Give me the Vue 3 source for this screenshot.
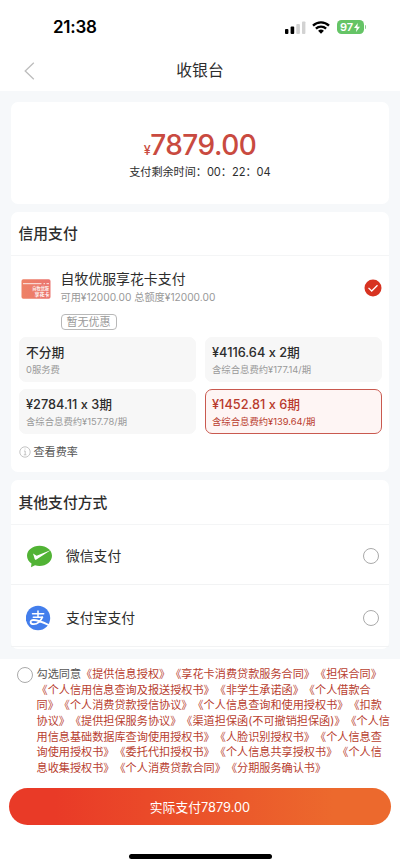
<script setup>
import { ref } from 'vue'

const plans = [
  { title: '不分期', note: '0服务费' },
  { title: '¥4116.64 x 2期', note: '含综合息费约¥177.14/期' },
  { title: '¥2784.11 x 3期', note: '含综合息费约¥157.78/期' },
  { title: '¥1452.81 x 6期', note: '含综合息费约¥139.64/期' },
]
const selected = ref(3)

const agreementLines = [
  '《提供信息授权》《享花卡消费贷款服务合同》《担保合同》',
  '《个人信用信息查询及报送授权书》《非学生承诺函》《个人借款合',
  '同》《个人消费贷款授信协议》《个人信息查询和使用授权书》《扣款',
  '协议》《提供担保服务协议》《渠道担保函(不可撤销担保函)》《个人信',
  '用信息基础数据库查询使用授权书》《人脸识别授权书》《个人信息查',
  '询使用授权书》《委托代扣授权书》《个人信息共享授权书》《个人信',
  '息收集授权书》《个人消费贷款合同》《分期服务确认书》',
]
</script>

<template>
  <div class="page">
    <header class="status">
      <span class="clock">21:38</span>
      <div class="indicators">
        <svg class="signal" width="21" height="13" viewBox="0 0 21 13">
          <rect x="0" y="8" width="3.4" height="5" rx="0.9" fill="#000" />
          <rect x="5.6" y="5.5" width="3.6" height="7.5" rx="0.9" fill="#000" />
          <rect x="11.3" y="3" width="3.6" height="10" rx="0.9" fill="#d2d2d2" />
          <rect x="17" y="0.4" width="3.4" height="12.6" rx="0.9" fill="#d2d2d2" />
        </svg>
        <svg class="wifi" width="18" height="13" viewBox="0 0 18 13" fill="none" stroke="#000" stroke-width="2.3">
          <path d="M1 4.6A11.5 11.5 0 0 1 17 4.6" />
          <path d="M3.9 7.7A7.4 7.4 0 0 1 14.1 7.7" />
          <path d="M6.1 9.8A4.2 4.2 0 0 1 11.9 9.8L9 12.8Z" fill="#000" stroke="none" />
        </svg>
        <div class="battery">
          <span>97</span>
          <svg width="6" height="9" viewBox="0 0 6 9"><path d="M3.8 0L0 5.1H2.6L2 9L6 3.7H3.4Z" fill="#fff" /></svg>
        </div>
        <i class="battery-tip"></i>
      </div>
    </header>

    <nav class="nav">
      <svg class="back" width="11" height="18" viewBox="0 0 11 18"><path d="M9.8 .8L1.2 9L9.8 17.2" fill="none" stroke="#bdbdbd" stroke-width="1.3" /></svg>
      <h1>收银台</h1>
    </nav>

    <main class="content">
      <section class="card amount">
        <div class="price"><small>¥</small>7879.00</div>
        <div class="timer">支付剩余时间：00：22：04</div>
      </section>

      <section class="card credit">
        <h2>信用支付</h2>
        <div class="account">
          <svg class="bank" width="30" height="20" viewBox="0 0 30 20">
            <defs>
              <linearGradient id="bankFill" x1="0" y1="0" x2="1" y2="0">
                <stop offset="0" stop-color="#ee8265" />
                <stop offset="1" stop-color="#ea7470" />
              </linearGradient>
            </defs>
            <rect x=".5" y=".3" width="29" height="19.4" rx="1.8" fill="url(#bankFill)" />
            <path d="M2 4.7H20.5M22.5 4.7H24M25.5 4.7H28" stroke="#fff" stroke-opacity=".85" stroke-width="1" />
            <text x="11.3" y="11.2" font-size="4.2" font-weight="500" fill="#fff">自牧优服</text>
            <text x="13.4" y="17.2" font-size="5" font-weight="700" fill="#fff">享花卡</text>
          </svg>
          <div class="info">
            <strong>自牧优服享花卡支付</strong>
            <p>可用¥12000.00 总额度¥12000.00</p>
            <span class="coupon">暂无优惠</span>
          </div>
          <svg class="checked" width="18" height="18" viewBox="0 0 18 18">
            <circle cx="9" cy="9" r="8.5" fill="#d73321" />
            <path d="M4.5 8.9L7.7 12L13.5 6.2" fill="none" stroke="#fff" stroke-width="1.3" />
          </svg>
        </div>
        <div class="plans">
          <div v-for="(plan, i) in plans" :key="i" class="plan" :class="{ active: selected === i }" @click="selected = i">
            <b>{{ plan.title }}</b>
            <span>{{ plan.note }}</span>
          </div>
        </div>
        <div class="rate">
          <svg width="12" height="12" viewBox="0 0 12 12" fill="none" stroke="#b5b5b5" stroke-width=".8">
            <circle cx="6" cy="6" r="5.2" />
            <path d="M5 5H6.2V8.7M4.8 8.8H7.4M5.6 3H6.5" />
          </svg>
          <span>查看费率</span>
        </div>
      </section>

      <section class="card others">
        <h2>其他支付方式</h2>
        <div class="method">
          <svg class="logo" width="26" height="26" viewBox="0 0 26 26">
            <path d="M13.5 2.7C20.4 2.7 26 7 26 12.8S20.4 23 13.5 23C11.9 23 10.4 22.7 9 22.2L5 24.3L5.5 20.6C2.8 18.8 1 16 1 12.8C1 7 6.6 2.7 13.5 2.7Z" fill="#51b335" />
            <path d="M7 10.4L10.6 12.7L25 7.1L10.4 16.5Q9.2 17.2 8.7 15.9Z" fill="#fff" />
          </svg>
          <span>微信支付</span>
          <i class="radio"></i>
        </div>
        <div class="method">
          <svg class="logo" width="26" height="26" viewBox="0 0 26 26">
            <circle cx="12" cy="13" r="12.2" fill="#437eec" />
            <g fill="none" stroke="#fff" stroke-linecap="round">
              <path d="M6.5 8.8H17.7M12 6V12.3M7.3 12.2H16.5" stroke-width="1.5" />
              <path d="M16.3 12.3C15 16 11.4 19.2 7.8 19.2C3.6 19.2 3.5 15 7.5 15C12 15 17 17.3 22.7 20" stroke-width="1.8" />
            </g>
          </svg>
          <span>支付宝支付</span>
          <i class="radio"></i>
        </div>
      </section>
    </main>

    <footer class="footer">
      <div class="agreement">
        <i class="radio"></i>
        <div class="terms">
          <div v-for="(line, i) in agreementLines" :key="i"><span v-if="i === 0" class="lead">勾选同意</span>{{ line }}</div>
        </div>
      </div>
      <button class="pay">实际支付7879.00</button>
      <div class="home"></div>
    </footer>
  </div>
</template>

<style>
body {
  background: #fff;
}
</style>

<style scoped>
* {
  box-sizing: border-box;
}
.page {
  width: 400px;
  height: 866px;
  display: flex;
  flex-direction: column;
  overflow: hidden;
  background: #fff;
  color: #2d2d2d;
  font-family: Inter, "Noto Sans CJK SC", sans-serif;
  font-feature-settings: "calt" 0;
  text-spacing-trim: space-all;
  white-space: nowrap;
}
.status {
  height: 50px;
  padding: 4px 34px 0 53px;
  display: flex;
  align-items: center;
  justify-content: space-between;
}
.clock {
  font-size: 17px;
  font-weight: 600;
  color: #000;
  letter-spacing: -0.25px;
}
.indicators {
  display: flex;
  align-items: center;
}
.signal {
  margin-right: -1px;
}
.wifi {
  margin-left: 7px;
}
.battery {
  width: 27px;
  height: 14px;
  margin-left: 7px;
  border-radius: 4.5px;
  background: #65c466;
  color: #fff;
  font-size: 11px;
  font-weight: 600;
  line-height: 14px;
  display: flex;
  align-items: center;
  justify-content: center;
  gap: 1px;
}
.battery-tip {
  width: 1.5px;
  height: 4px;
  margin-left: 1px;
  border-radius: 0 2px 2px 0;
  background: #8bd28c;
}
.nav {
  height: 41px;
  padding: 0 24px;
  display: grid;
  grid-template-columns: 11px 1fr 11px;
  align-items: center;
}
.nav h1 {
  margin: 0;
  font-size: 15.8px;
  font-weight: 400;
  line-height: 41px;
  text-align: center;
}
.content {
  height: 568px;
  padding: 11px 11px 0;
  display: flex;
  flex-direction: column;
  gap: 8px;
  background: #f6f8fa;
}
.card {
  border-radius: 7px;
  background: #fff;
}
.card h2 {
  margin: 0;
  padding-left: 7.5px;
  height: 44px;
  border-bottom: 1px solid #f4f5f6;
  font-size: 14.8px;
  font-weight: 500;
  line-height: 45px;
}
.amount {
  height: 102px;
  padding-top: 26px;
  text-align: center;
}
.price {
  height: 35px;
  font-size: 28px;
  line-height: 34px;
  font-weight: 500;
  color: #c94a40;
  letter-spacing: -0.5px;
}
.price small {
  font-size: 12.5px;
}
.timer {
  font-size: 11.1px;
  line-height: 18px;
}
.credit {
  height: 260px;
}
.account {
  height: 81px;
  padding: 13px 8px 0 10px;
  display: flex;
}
.bank {
  margin-top: 9.5px;
  font-family: "Noto Sans CJK SC", sans-serif;
}
.info {
  flex: 1;
  padding-left: 9.5px;
  display: flex;
  flex-direction: column;
  align-items: flex-start;
}
.info strong {
  font-size: 13.9px;
  font-weight: 400;
  line-height: 20px;
}
.info p {
  margin: 0;
  font-size: 10.2px;
  line-height: 16px;
  color: #999;
}
.coupon {
  height: 16px;
  margin-top: 9px;
  padding: 0 5px;
  border: 1px solid #b8b8b8;
  border-radius: 4px;
  font-size: 11px;
  line-height: 14px;
  color: #999;
}
.checked {
  margin-top: 10px;
  margin-right: -1px;
}
.plans {
  padding: 0 7.5px 0 7.5px;
  display: grid;
  grid-template-columns: 1fr 1fr;
  grid-auto-rows: 44.5px;
  gap: 7.5px 9px;
}
.plan {
  padding: 6px 6.5px 0;
  border: 1px solid #f7f7f7;
  border-radius: 7px;
  background: #f7f7f7;
  display: flex;
  flex-direction: column;
}
.plan b {
  font-size: 12.75px;
  font-weight: 500;
  line-height: 18px;
}
.plan span {
  font-size: 9.35px;
  line-height: 16px;
  color: #999;
}
.plan.active {
  border-color: #c9594f;
  background: #fef5f4;
}
.plan.active b,
.plan.active span {
  color: #b93b2d;
}
.rate {
  margin-top: 10px;
  padding-left: 7.5px;
  display: flex;
  align-items: center;
  gap: 3px;
  font-size: 11.1px;
  line-height: 16px;
  color: #555;
}
.others {
  height: 169px;
}
.others h2 {
  height: 45px;
  line-height: 46px;
}
.method {
  height: 60px;
  padding: 3px 10px 0 15px;
  border-bottom: 1px solid #f2f3f4;
  display: flex;
  align-items: center;
}
.method + .method {
  height: 62px;
  padding-top: 5px;
}
.method span {
  flex: 1;
  padding: 0 0 2px 14px;
  font-size: 13.8px;
}
.radio {
  width: 16px;
  height: 16px;
  flex: none;
  border: 1px solid #aaa;
  border-radius: 50%;
}
.footer {
  flex: 1;
  padding: 8px 9px 0;
}
.agreement {
  height: 121px;
  padding-left: 8px;
  display: flex;
  gap: 3.5px;
}
.terms {
  font-size: 11.15px;
  line-height: 15.65px;
  color: #b8402f;
}
.lead {
  color: #555;
}
.pay {
  width: 382px;
  height: 37px;
  padding: 0;
  display: block;
  border: 0;
  border-radius: 19px;
  background: linear-gradient(90deg, #e93a27 12%, #ec692d 85%);
  color: #fff;
  font: inherit;
  font-size: 12.8px;
}
.home {
  width: 143px;
  height: 5px;
  margin: 29px auto 0;
  border-radius: 3px;
  background: #000;
}
</style>
